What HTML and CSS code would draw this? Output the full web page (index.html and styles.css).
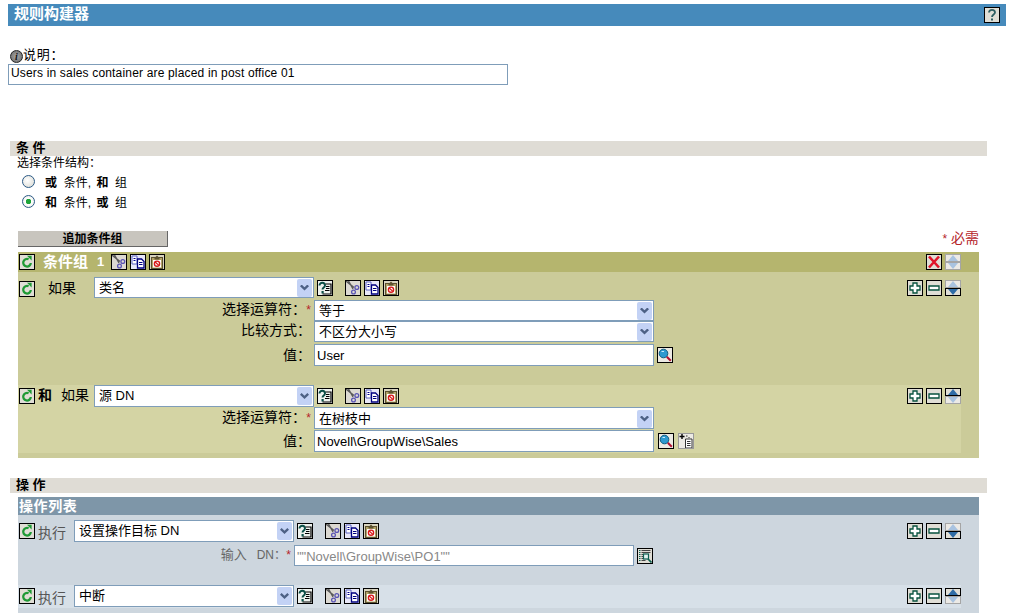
FILE: index.html
```html
<!DOCTYPE html>
<html lang="zh-CN">
<head>
<meta charset="utf-8">
<title>规则构建器</title>
<link rel="stylesheet" href="styles.css">
</head>
<body>
<svg class="defs" xmlns="http://www.w3.org/2000/svg">
  <symbol id="i-refresh" viewBox="0 0 14 14"><path d="M8.600 4.300A3.800 3.800 0 1 0 10.800 8" fill="none" stroke="#1f9a35" stroke-width="2.300"/><path d="M7 .8h4.600v4.800z" fill="#1f9a35"/></symbol>
  <symbol id="i-cut" viewBox="0 0 14 14"><rect width="14" height="14" fill="#dcd9d2"/><path d="M0 0l8 6.500M2.500 0l4.500 8" stroke="#5a5a5a" stroke-width="1.400" fill="none"/><circle cx="10.800" cy="6.500" r="1.900" fill="none" stroke="#5a55b5" stroke-width="1.300"/><circle cx="7.500" cy="11" r="1.900" fill="none" stroke="#5a55b5" stroke-width="1.300"/></symbol>
  <symbol id="i-copy" viewBox="0 0 14 14"><rect width="14" height="14" fill="#e8e8f8"/><path d="M1 1h5v8H1z" fill="#fff" stroke="#5a62c0"/><path d="M2.500 3.500h2M2.500 5.500h2" stroke="#000090"/><path d="M6.500 4h4l2.500 2.500V13H6.500z" fill="#fff" stroke="#000080" stroke-width="1.300"/><path d="M8 7.500h3.500M8 9.500h3.500" stroke="#000080" stroke-width="1.200"/></symbol>
  <symbol id="i-paste" viewBox="0 0 14 14"><rect width="14" height="14" fill="#d8d4c0"/><rect x="1.500" y="2.500" width="11" height="11" fill="#b3a468" stroke="#5c5230"/><rect x="3" y="5" width="8" height="7.500" fill="#fff"/><path d="M4.500 3l2.500-2.500L9.500 3v1.500h-5z" fill="#5c5230"/><circle cx="7" cy="8.700" r="2.600" fill="#fff" stroke="#d81818" stroke-width="1.400"/><path d="M5.200 7l3.600 3.400" stroke="#d81818" stroke-width="1.200"/></symbol>
  <symbol id="i-note" viewBox="0 0 14 14"><rect width="14" height="14" fill="#eef2ee"/><path d="M1.500 4.500C1.500 .8 7 .8 7 4.500 7 6.500 4.500 6.500 4.500 8.500" fill="none" stroke="#0b4f47" stroke-width="1.900"/><path d="M3.500 10h2.200v2.500H3.500z" fill="#0b4f47"/><path d="M7.500 3h5.500v10H4.500" fill="none" stroke="#000" stroke-width="1.200"/><path d="M8 5.500h3.500M8 7.500h3.500M7 9.500h4.500" stroke="#000"/></symbol>
  <symbol id="i-search" viewBox="0 0 14 14"><rect width="14" height="14" fill="#eceae4"/><circle cx="5.500" cy="5.500" r="4.300" fill="#2e9ad0" stroke="#0d5c80"/><path d="M3.500 3.500h2.500" stroke="#c8ecff"/><path d="M8.800 8.800l4 4" stroke="#b01030" stroke-width="2"/></symbol>
  <symbol id="i-new" viewBox="0 0 14 14"><rect width="14" height="14" fill="#eceae4"/><path d="M6.500 5h6.500v9H6.500z" fill="#fff" stroke="#333"/><path d="M8 7.500h3.500M8 9.500h3.500M8 11.500h3.500" stroke="#333"/><path d="M3 0v5M.5 2.500h5" stroke="#000" stroke-width="1.400"/><path d="M7 2h1.500M9.500 3.500h1" stroke="#333"/></symbol>
  <symbol id="i-list" viewBox="0 0 14 14"><path d="M1 1.500h1.500M1 3.500h1.500M1 5.500h1.500M1 7.500h1.500M1 9.500h1.500M1 11.500h1.500" stroke="#0d6050"/><path d="M3.500 1.500h9M3.500 3.500h9M3.500 5.500h2M3.500 7.500h2M3.500 9.500h2M3.500 11.500h4" stroke="#444"/><rect x="5.500" y="5" width="5" height="5" fill="#dff2ee" stroke="#0d6050" stroke-width="1.200"/><path d="M10 10l3.500 3.500" stroke="#0d6050" stroke-width="1.700"/></symbol>
  <symbol id="i-plus" viewBox="0 0 14 14"><path d="M5 2h4v3h3v4H9v3H5V9H2V5h3z" fill="#fff" stroke="#07523e" stroke-width="1.300"/></symbol>
  <symbol id="i-minus" viewBox="0 0 14 14"><path d="M2 5h10v4H2z" fill="#fff" stroke="#07523e" stroke-width="1.300"/></symbol>
  <symbol id="i-x" viewBox="0 0 14 14"><path d="M2 1.500l10 11M12 1.500l-10 11" stroke="#e0142a" stroke-width="2.600"/></symbol>
  <symbol id="i-help" viewBox="0 0 14 14"><path d="M4 4.500C4 1 10 1 10 4.500 10 6.500 7 6.500 7 9" fill="none" stroke="#2f5f62" stroke-width="1.800"/><path d="M6 10.500h2v2H6z" fill="#2f5f62"/></symbol>
</svg>

<header class="titlebar">
  <h1>规则构建器</h1>
  <svg class="ic"><use href="#i-help"/></svg>
</header>

<section class="desc">
  <div class="desc-label"><span class="info">i</span><span class="desc-text">说明：</span></div>
  <input class="desc-input" type="text" value="Users in sales container are placed in post office 01">
</section>

<h2 class="section-head">条 件</h2>
<div class="structure">
  <div class="structure-title">选择条件结构：</div>
  <label class="radio-line"><input class="radio" type="radio" name="s"><span><b>或</b> &nbsp;条件<span class="cm">,</span> <b>和</b> &nbsp;组</span></label>
  <label class="radio-line"><input class="radio" type="radio" name="s" checked><span><b>和</b> &nbsp;条件<span class="cm">,</span> <b>或</b> &nbsp;组</span></label>
</div>

<div class="toolbar">
  <button class="add-btn" type="button">追加条件组</button>
  <span class="required"><i>*</i> 必需</span>
</div>

<section class="group">
  <div class="group-head">
    <svg class="ic"><use href="#i-refresh"/></svg>
    <span class="group-title">条件组</span><span class="group-num">1</span>
    <span class="tools tools-head">
      <svg class="ic"><use href="#i-cut"/></svg><svg class="ic"><use href="#i-copy"/></svg><svg class="ic"><use href="#i-paste"/></svg>
    </span>
    <span class="end-tools">
      <svg class="ic"><use href="#i-x"/></svg>
      <span class="updown"><span class="arr up off"></span><span class="arr down off"></span></span>
    </span>
  </div>

  <div class="cond cond-first">
    <div class="line">
      <span class="lead"><svg class="ic"><use href="#i-refresh"/></svg><span class="if-text">如果</span></span>
      <div class="sel sel-short"><span>类名</span><span class="drop"></span></div>
      <svg class="ic ic-note"><use href="#i-note"/></svg>
      <span class="tools"><svg class="ic"><use href="#i-cut"/></svg><svg class="ic"><use href="#i-copy"/></svg><svg class="ic"><use href="#i-paste"/></svg></span>
      <span class="end-tools">
        <svg class="ic"><use href="#i-plus"/></svg><svg class="ic"><use href="#i-minus"/></svg>
        <span class="updown"><span class="arr up off"></span><span class="arr down"></span></span>
      </span>
    </div>
    <div class="sub"><span class="lbl">选择运算符：<i>*</i></span><div class="sel sel-long"><span>等于</span><span class="drop"></span></div></div>
    <div class="sub"><span class="lbl">比较方式：</span><div class="sel sel-long"><span>不区分大小写</span><span class="drop"></span></div></div>
    <div class="sub sub-input"><span class="lbl">值：</span><input class="field" type="text" value="User"><svg class="ic ic-after"><use href="#i-search"/></svg></div>
  </div>

  <div class="cond cond-second">
    <div class="line">
      <span class="lead"><svg class="ic"><use href="#i-refresh"/></svg><b class="and">和</b><span class="if-text2">如果</span></span>
      <div class="sel sel-short"><span>源 DN</span><span class="drop"></span></div>
      <svg class="ic ic-note"><use href="#i-note"/></svg>
      <span class="tools"><svg class="ic"><use href="#i-cut"/></svg><svg class="ic"><use href="#i-copy"/></svg><svg class="ic"><use href="#i-paste"/></svg></span>
      <span class="end-tools">
        <svg class="ic"><use href="#i-plus"/></svg><svg class="ic"><use href="#i-minus"/></svg>
        <span class="updown"><span class="arr up"></span><span class="arr down off"></span></span>
      </span>
    </div>
    <div class="sub"><span class="lbl">选择运算符：<i>*</i></span><div class="sel sel-long"><span>在树枝中</span><span class="drop"></span></div></div>
    <div class="sub sub-input"><span class="lbl">值：</span><input class="field" type="text" value="Novell\GroupWise\Sales"><svg class="ic ic-after2"><use href="#i-search"/></svg><svg class="ic ic-soft"><use href="#i-new"/></svg></div>
  </div>
</section>

<h2 class="section-head section-ops">操 作</h2>
<section class="ops">
  <div class="ops-head">操作列表</div>
  <div class="op op-first">
    <div class="line op-line">
      <span class="lead op-lead"><svg class="ic"><use href="#i-refresh"/></svg><span class="do-text">执行</span></span>
      <div class="sel sel-short"><span>设置操作目标 DN</span><span class="drop"></span></div>
      <svg class="ic ic-note"><use href="#i-note"/></svg>
      <span class="tools"><svg class="ic"><use href="#i-cut"/></svg><svg class="ic"><use href="#i-copy"/></svg><svg class="ic"><use href="#i-paste"/></svg></span>
      <span class="end-tools">
        <svg class="ic"><use href="#i-plus"/></svg><svg class="ic"><use href="#i-minus"/></svg>
        <span class="updown"><span class="arr up off"></span><span class="arr down"></span></span>
      </span>
    </div>
    <div class="sub op-sub"><span class="lbl lbl-muted">输入<span class="dn">DN：</span><i>*</i></span><input class="field field-muted" type="text" value="&quot;&quot;Novell\GroupWise\PO1&quot;&quot;"><svg class="ic ic-after"><use href="#i-list"/></svg></div>
  </div>
  <div class="op op-second">
    <div class="line op-line">
      <span class="lead op-lead"><svg class="ic"><use href="#i-refresh"/></svg><span class="do-text">执行</span></span>
      <div class="sel sel-short"><span>中断</span><span class="drop"></span></div>
      <svg class="ic ic-note"><use href="#i-note"/></svg>
      <span class="tools"><svg class="ic"><use href="#i-cut"/></svg><svg class="ic"><use href="#i-copy"/></svg><svg class="ic"><use href="#i-paste"/></svg></span>
      <span class="end-tools">
        <svg class="ic"><use href="#i-plus"/></svg><svg class="ic"><use href="#i-minus"/></svg>
        <span class="updown"><span class="arr up"></span><span class="arr down off"></span></span>
      </span>
    </div>
  </div>
</section>
</body>
</html>
```

FILE: styles.css
```css
* { box-sizing: border-box; }
html, body { margin: 0; padding: 0; height: 613px; overflow: hidden; background: #fff; }
body { font: 12px/16px "Liberation Sans", "Noto Sans CJK SC", sans-serif; color: #000; padding-top: 4px; }
.defs { display: none; }

.ic { display: block; flex: none; width: 16px; height: 16px; border: 1px solid #000; background: #e0ded6; }

.titlebar { display: flex; align-items: center; justify-content: space-between; height: 22px; width: 998px; margin-left: 8px; padding: 0 6px; background: #468abb; }
.titlebar h1 { margin: 0 0 2px; font: bold 15px/20px "Liberation Sans", "Noto Sans CJK SC", sans-serif; color: #fff; }

.desc { height: 115px; padding: 21px 0 0 8px; }
.desc-label { display: flex; align-items: center; height: 16px; padding-left: 2px; margin-bottom: 1px; }
.desc-text { letter-spacing: .8px; font-size: 13px; }
.info { width: 13px; height: 13px; margin-right: 0; margin-top: 3px; border-radius: 50%; background: radial-gradient(circle, #aaa, #666); border: 1px solid #222; color: #111; font: italic bold 10px/11px "Liberation Serif", serif; text-align: center; }
.desc-input { display: block; width: 500px; height: 21px; padding: 0 2px 3px; border: 1px solid #7f9db9; font: 12px "Liberation Sans", sans-serif; letter-spacing: .17px; color: #000; outline: 0; border-radius: 0; margin-top: 1px; }

.section-head { margin: 0 0 0 10px; width: 977px; height: 15px; padding-left: 6px; background: #dfdcd5; font: bold 13px/13px "Liberation Sans", "Noto Sans CJK SC", sans-serif; }
.section-ops { margin-top: 20px; }

.structure { height: 75px; padding-left: 17px; }
.structure-title { height: 15px; line-height: 15px; }
.radio-line { display: flex; align-items: center; gap: 10px; height: 20px; padding-left: 5px; font-size: 12px; }
.radio-line > span { margin-top: 4px; }
.radio-line .cm { margin-right: 2px; }
.radio { appearance: none; flex: none; width: 13px; height: 13px; margin: 0; border: 1px solid #2b5a86; border-radius: 50%; background: radial-gradient(circle at 40% 40%, #fff, #d8d8d0); }
.radio:checked { background: radial-gradient(circle, #1fa53a 0 2.500px, #fff 3px, #e6e6e0 100%); }

.toolbar { display: flex; justify-content: space-between; align-items: center; width: 961px; height: 16px; margin: 0 0 5px 18px; }
.add-btn { width: 150px; height: 16px; padding: 0; border: 0; border-right: 1px solid #666; border-bottom: 1px solid #666; background: #c8c5be; font: bold 12px/14px "Liberation Sans", "Noto Sans CJK SC", sans-serif; color: #000; }
.required { color: #b5242a; font-size: 14px; padding-bottom: 2px; }
.required i { font-style: normal; font-size: 12px; }

.group { width: 961px; margin-left: 18px; background: #cbcb99; padding-bottom: 5px; }
.group-head { display: flex; align-items: center; height: 20px; padding-left: 1px; background: #b5b56e; }
.group-title { margin-left: 8px; color: #fff; font-weight: bold; font-size: 15px; }
.group-num { margin-left: 9px; color: #fff; font-weight: bold; font-size: 13px; }
.tools { display: flex; gap: 3px; margin-left: 12px; }
.tools-head { margin-left: 7px; }
.end-tools { display: flex; align-items: center; gap: 3px; margin-left: auto; padding-right: 18px; }

.updown { display: flex; flex-direction: column; width: 16px; height: 16px; }
.arr { position: relative; display: block; width: 16px; height: 8px; background: #e0ded6; border: 1px solid #000; }
.arr::after { content: ""; position: absolute; left: 2px; width: 0; height: 0; border-left: 5px solid transparent; border-right: 5px solid transparent; }
.arr.up::after { top: 0; border-bottom: 6px solid #2f6ca6; }
.arr.down::after { top: 0; border-top: 6px solid #2f6ca6; }
.arr.off { border-color: #a5a5a5; background: #eceae6; }
.arr.up.off::after { border-bottom-color: #a9c3e0; }
.arr.down.off::after { border-top-color: #a9c3e0; }

.line { display: flex; align-items: center; height: 22px; padding-left: 1px; }
.lead { display: flex; align-items: center; width: 75px; flex: none; font-size: 14px; }
.if-text { margin: 0 0 2px 13px; }
.and { margin: 0 0 2px 3px; font-size: 14px; }
.if-text2 { margin: 0 0 2px 9px; }
.op-lead { width: 55px; }
.do-text { margin: 3px 0 0 3px; color: #555; font-size: 14px; }

.sel { display: flex; align-items: center; justify-content: space-between; height: 22px; flex: none; padding: 0 1px 0 4px; background: #fff; border: 1px solid #7f9db9; font-size: 13px; }
.sel-short { width: 220px; }
.sel-long { width: 340px; }
.drop { position: relative; display: block; width: 15px; height: 18px; background: #c3d2f5; border-radius: 2px; }
.drop::after { content: ""; position: absolute; left: 3px; top: 6px; width: 9px; height: 6px; background: #4d6185; clip-path: polygon(0 30%, 18% 0, 50% 45%, 82% 0, 100% 30%, 50% 100%); }
.ic-note { margin-left: 3px; }
.ic-after { margin-left: 3px; }
.ic-after2 { margin-left: 4px; }
.ic-soft { margin-left: 4px; border-color: #999; }

.sub { display: flex; align-items: center; height: 22px; }
.lbl { width: 296px; flex: none; padding: 0 3px 3px 0; text-align: right; font-size: 14px; }
.lbl i { display: inline-block; width: 5px; color: #b5242a; font-style: normal; font-size: 12px; text-align: center; }
.field { display: block; width: 340px; height: 22px; padding: 0 2px; background: #fff; border: 1px solid #7f9db9; font: 13px "Liberation Sans", sans-serif; color: #000; outline: 0; border-radius: 0; flex: none; }
.sub-input { margin-top: 1px; height: 22px; }
.sub-input .lbl { padding-bottom: 1px; }

.cond-first { padding-top: 5px; height: 113px; }
.cond-first > .line { height: 23px; align-items: flex-start; }
.cond-first .sel { height: 21px; }
.cond-first .sub { height: 21px; }
.cond-first .sub-input { height: 22px; margin-top: 2px; }
.cond-first .line > .ic, .cond-first .line .tools, .cond-first .line .end-tools, .cond-first .lead { margin-top: 3px; }
.cond-second { width: 943px; height: 68px; background: #d4d4a4; }
.cond-second .end-tools { padding-right: 0; }
.cond-second .sel-long { padding-top: 1px; }
.cond-second .sub:not(.sub-input) .lbl { padding-bottom: 2px; }

.ops { width: 961px; height: 120px; margin: 4px 0 0 18px; background: #cdd6de; }
.ops-head { height: 18px; padding-left: 1px; background: #7e96a8; color: #fff; font-weight: bold; font-size: 14px; line-height: 18px; letter-spacing: .6px; }
.op-first { height: 70px; padding-top: 5px; }
.op-second { width: 943px; height: 23px; background: #d7e0e8; }
.op-second .end-tools { padding-right: 0; }
.op-sub { margin-top: 3px; height: 21px; }
.op-sub .lbl { width: 276px; font-size: 13px; padding-bottom: 1px; }
.dn { margin-left: 10px; font-size: 12px; }
.lbl-muted { color: #666; }
.field-muted { height: 21px; color: #888; padding-top: 1px; }
```
